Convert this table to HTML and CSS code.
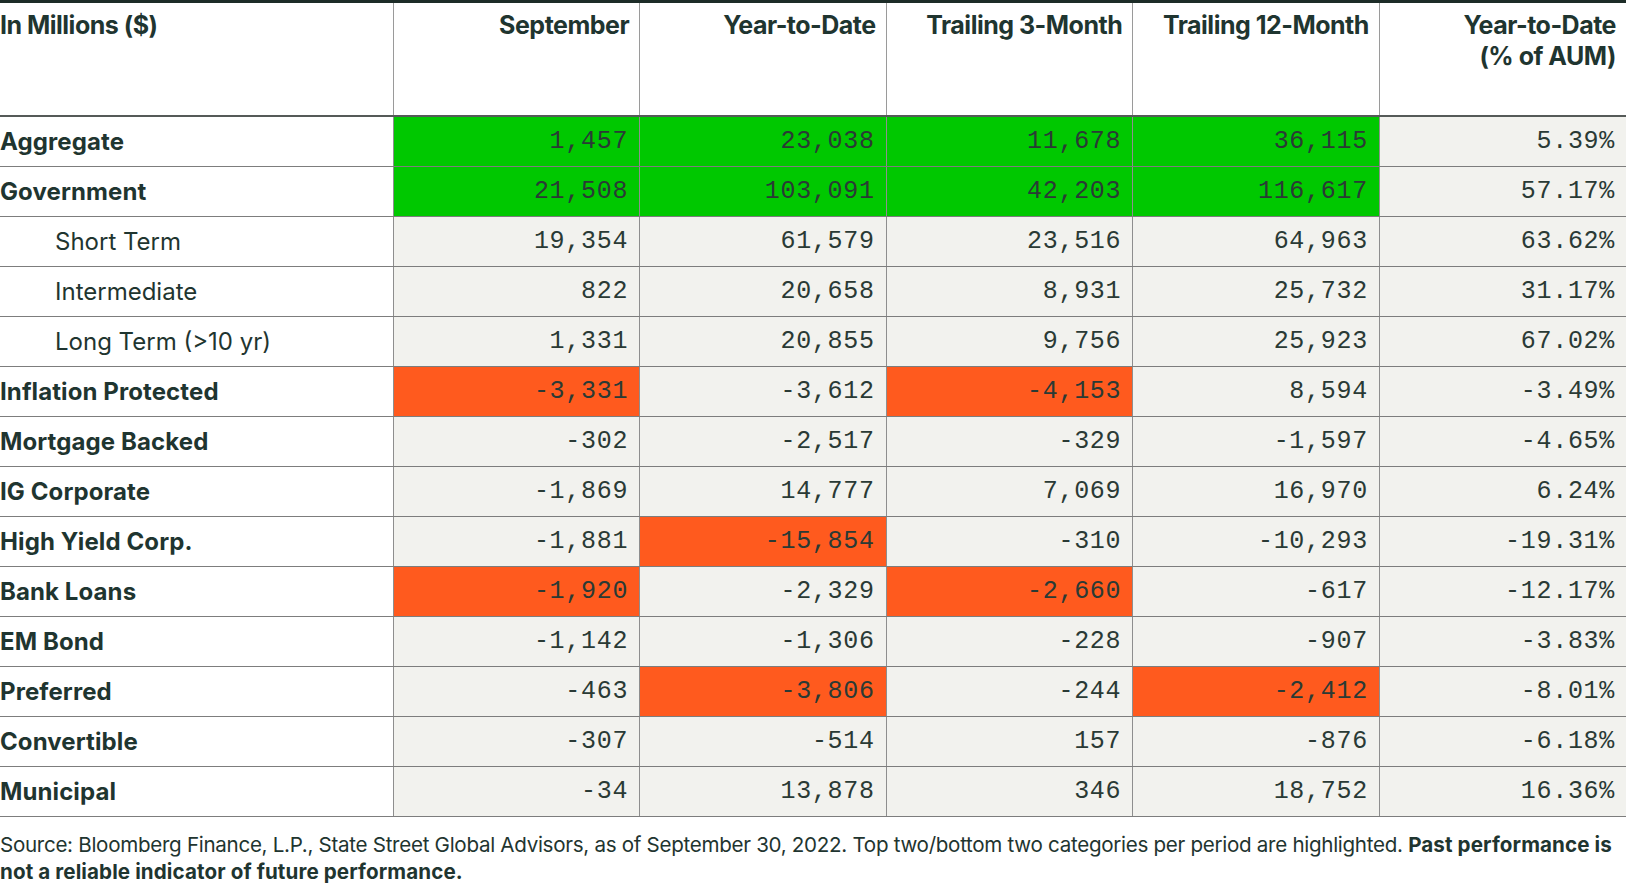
FILE: index.html
```html
<!DOCTYPE html>
<html lang="en">
<head>
<meta charset="utf-8">
<title>Fixed Income ETF Flows</title>
<link rel="stylesheet" href="styles.css">
</head>
<body>
<table class="flows">
  <colgroup>
    <col class="c-label">
    <col class="c-num"><col class="c-num"><col class="c-num"><col class="c-num"><col class="c-num">
  </colgroup>
  <thead>
    <tr>
      <th class="label">In Millions ($)</th>
      <th>September</th>
      <th>Year-to-Date</th>
      <th>Trailing 3-Month</th>
      <th>Trailing 12-Month</th>
      <th>Year-to-Date<br>(% of AUM)</th>
    </tr>
  </thead>
  <tbody>
    <tr><td class="label">Aggregate</td><td class="top">1,457</td><td class="top">23,038</td><td class="top">11,678</td><td class="top">36,115</td><td>5.39%</td></tr>
    <tr><td class="label">Government</td><td class="top">21,508</td><td class="top">103,091</td><td class="top">42,203</td><td class="top">116,617</td><td>57.17%</td></tr>
    <tr><td class="label sub">Short Term</td><td>19,354</td><td>61,579</td><td>23,516</td><td>64,963</td><td>63.62%</td></tr>
    <tr><td class="label sub">Intermediate</td><td>822</td><td>20,658</td><td>8,931</td><td>25,732</td><td>31.17%</td></tr>
    <tr><td class="label sub">Long Term (&gt;10 yr)</td><td>1,331</td><td>20,855</td><td>9,756</td><td>25,923</td><td>67.02%</td></tr>
    <tr><td class="label">Inflation Protected</td><td class="bottom">-3,331</td><td>-3,612</td><td class="bottom">-4,153</td><td>8,594</td><td>-3.49%</td></tr>
    <tr><td class="label">Mortgage Backed</td><td>-302</td><td>-2,517</td><td>-329</td><td>-1,597</td><td>-4.65%</td></tr>
    <tr><td class="label">IG Corporate</td><td>-1,869</td><td>14,777</td><td>7,069</td><td>16,970</td><td>6.24%</td></tr>
    <tr><td class="label">High Yield Corp.</td><td>-1,881</td><td class="bottom">-15,854</td><td>-310</td><td>-10,293</td><td>-19.31%</td></tr>
    <tr><td class="label">Bank Loans</td><td class="bottom">-1,920</td><td>-2,329</td><td class="bottom">-2,660</td><td>-617</td><td>-12.17%</td></tr>
    <tr><td class="label">EM Bond</td><td>-1,142</td><td>-1,306</td><td>-228</td><td>-907</td><td>-3.83%</td></tr>
    <tr><td class="label">Preferred</td><td>-463</td><td class="bottom">-3,806</td><td>-244</td><td class="bottom">-2,412</td><td>-8.01%</td></tr>
    <tr><td class="label">Convertible</td><td>-307</td><td>-514</td><td>157</td><td>-876</td><td>-6.18%</td></tr>
    <tr><td class="label">Municipal</td><td>-34</td><td>13,878</td><td>346</td><td>18,752</td><td>16.36%</td></tr>
  </tbody>
</table>
<p class="source">Source: Bloomberg Finance, L.P., State Street Global Advisors, as of September 30, 2022. Top two/bottom two categories per period are highlighted. <strong>Past performance is<br>not a reliable indicator of future performance.</strong></p>
</body>
</html>
```
FILE: styles.css
```css
html, body {
  margin: 0;
  padding: 0;
  background: #ffffff;
}
body {
  font-family: "Inter", "Liberation Sans", sans-serif;
  color: #1f3530;
  width: 1626px;
}
.flows {
  width: 1626px;
  border-collapse: collapse;
  table-layout: fixed;
}
.c-label { width: 393px; }
.c-num { width: 246.6px; }

.flows th {
  font-size: 25px;
  font-weight: 700;
  line-height: 31px;
  letter-spacing: -0.5px;
  text-align: right;
  vertical-align: top;
  height: 114px;
  padding: 7px 10px 0 0;
  border-top: 3px solid #1d2c28;
  border-bottom: 2px solid #555a58;
  border-right: 1px solid #9a9a9a;
  background: #ffffff;
  box-sizing: border-box;
}
.flows th.label {
  text-align: left;
  padding-left: 0;
}
.flows th:last-child,
.flows td:last-child {
  border-right: none;
}
.flows td {
  height: 49px;
  padding: 0 11px 0 0;
  border-bottom: 1px solid #7d7d7d;
  border-right: 1px solid #8e8e8e;
  background: #f2f2ee;
  text-align: right;
  vertical-align: middle;
  font-family: "Liberation Mono", "DejaVu Sans Mono", monospace;
  font-size: 25px;
  letter-spacing: 0.7px;
  color: #2a3a35;
}
.flows td.label {
  background: #ffffff;
  text-align: left;
  padding: 0;
  font-family: "Inter", "Liberation Sans", sans-serif;
  font-size: 24px;
  font-weight: 700;
  letter-spacing: 0.1px;
  color: #1f3530;
}
.flows td.sub {
  padding-left: 55px;
  font-weight: 400;
  letter-spacing: 0;
}
.flows td.top {
  background: #00c800;
}
.flows td.bottom {
  background: #ff5a1e;
}
.source {
  margin: 14px 0 0 0;
  font-size: 20.6px;
  line-height: 27px;
  letter-spacing: -0.3px;
  color: #1f3530;
}
.source strong {
  font-weight: 700;
  letter-spacing: 0.1px;
}
```
